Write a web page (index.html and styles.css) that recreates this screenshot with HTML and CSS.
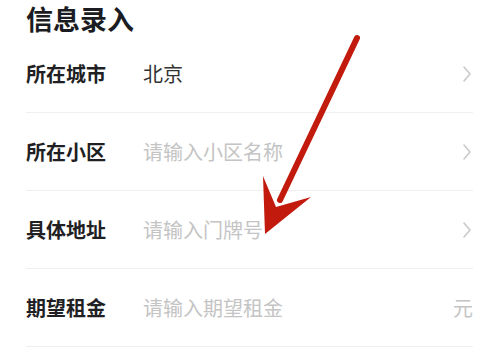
FILE: index.html
```html
<!DOCTYPE html>
<html lang="zh-CN">
<head>
<meta charset="utf-8">
<link rel="stylesheet" href="styles.css">
</head>
<body>
<div class="page">
  <h1 class="title">信息录入</h1>
  <div class="form">
    <div class="row">
      <span class="label">所在城市</span>
      <span class="value">北京</span>
      <svg class="chev" viewBox="0 0 10 18" width="10" height="18"><path d="M2 2 L8 9 L2 16" fill="none" stroke="#c9c9c9" stroke-width="1.6" stroke-linecap="round" stroke-linejoin="round"/></svg>
    </div>
    <div class="row">
      <span class="label">所在小区</span>
      <span class="value placeholder">请输入小区名称</span>
      <svg class="chev" viewBox="0 0 10 18" width="10" height="18"><path d="M2 2 L8 9 L2 16" fill="none" stroke="#c9c9c9" stroke-width="1.6" stroke-linecap="round" stroke-linejoin="round"/></svg>
    </div>
    <div class="row">
      <span class="label">具体地址</span>
      <span class="value placeholder">请输入门牌号</span>
      <svg class="chev" viewBox="0 0 10 18" width="10" height="18"><path d="M2 2 L8 9 L2 16" fill="none" stroke="#c9c9c9" stroke-width="1.6" stroke-linecap="round" stroke-linejoin="round"/></svg>
    </div>
    <div class="row">
      <span class="label">期望租金</span>
      <span class="value placeholder">请输入期望租金</span>
      <span class="unit">元</span>
    </div>
  </div>
  <svg class="arrow" viewBox="0 0 485 358" width="485" height="358">
    <line x1="357" y1="38" x2="280" y2="200" stroke="#c21a0c" stroke-width="6" stroke-linecap="round"/>
    <path d="M263 176 L276 207 L311 197 L265 234 Z" fill="#c21a0c"/>
  </svg>
</div>
</body>
</html>
```

FILE: styles.css
```css
html, body {
  margin: 0;
  padding: 0;
  background: #ffffff;
}
.page {
  position: relative;
  width: 485px;
  height: 358px;
  overflow: hidden;
  padding: 0 12px 0 26px;
  box-sizing: border-box;
  font-family: "Noto Sans CJK SC", "Noto Sans", sans-serif;
}
.title {
  margin: 0;
  height: 35px;
  line-height: 38px;
  font-size: 27px;
  font-weight: 700;
  color: #1b1c22;
}
.form {
  display: flex;
  flex-direction: column;
}
.row {
  display: flex;
  align-items: center;
  height: 77px;
  border-bottom: 1px solid #efefef;
}
.label {
  width: 117px;
  flex: none;
  font-size: 20px;
  font-weight: 600;
  color: #1f1f24;
}
.value {
  flex: 1;
  font-size: 20px;
  color: #333;
}
.placeholder {
  color: #c4c4c4;
}
.chev {
  flex: none;
  margin-right: 1px;
}
.unit {
  font-size: 20px;
  color: #c4c4c4;
}
.arrow {
  position: absolute;
  left: 0;
  top: 0;
  pointer-events: none;
}
```
